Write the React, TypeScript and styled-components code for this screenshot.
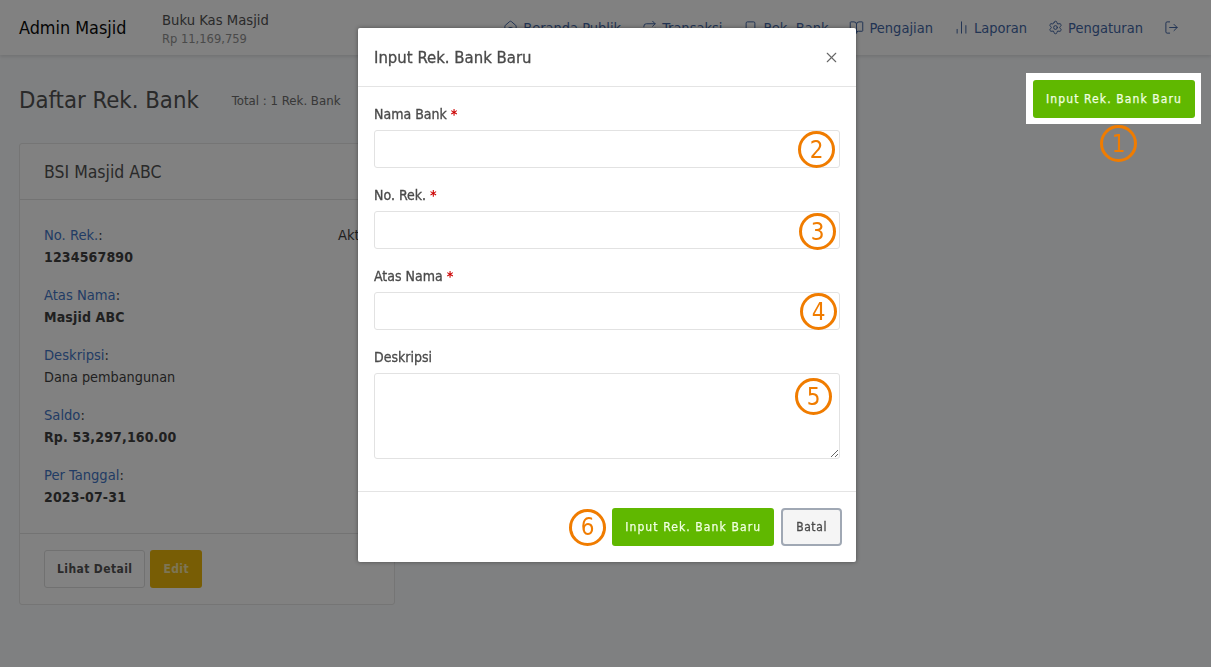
import React from "react";
import styled, { createGlobalStyle } from "styled-components";
import { Bookmark, BookOpen, ChartNoAxesColumn, Home, LogOut, Repeat, Settings, X } from "lucide-react";

const GlobalStyle = createGlobalStyle`
  html, body {
    margin: 0;
    padding: 0;
    height: 100%;
    background: #f4f6f8;
    overflow: hidden;
    font-family: "DejaVu Sans Condensed", "DejaVu Sans", sans-serif;
    font-stretch: condensed;
    font-size: 14px;
    color: #363636;
  }
  * { box-sizing: border-box; }
`;

const Page = styled.div`
  height: 667px;
  width: 1211px;
`;

const Navbar = styled.nav`
  height: 55px;
  display: flex;
  align-items: center;
  padding: 0 19px;
  background: #f8f8f8;
  box-shadow: 0 2px 3px rgba(10, 10, 10, 0.1);
`;

const Brand = styled.div`
  font-size: 17.85px;
  color: #000;
  width: 143px;
`;

const KasBlock = styled.div`
  display: flex;
  flex-direction: column;
  gap: 3px;
  margin-top: 1px;
`;

const KasTitle = styled.div`
  font-size: 14.7px;
  color: #4a4a4a;
`;

const KasValue = styled.div`
  font-size: 12.8px;
  color: #8a8a8a;
`;

const NavMenu = styled.div`
  margin-left: auto;
  display: flex;
  align-items: center;
  gap: 21px;
  padding-right: 13px;
`;

const NavLink = styled.a`
  display: flex;
  align-items: center;
  gap: 5px;
  font-size: 14.5px;
  color: #3a5f9f;
  white-space: nowrap;
`;

const Content = styled.main`
  padding: 30px 19px 0;
`;

const TitleRow = styled.div`
  display: flex;
  align-items: center;
  gap: 33px;
  height: 58px;
  padding-bottom: 28px;
`;

const PageTitle = styled.h1`
  margin: 0;
  font-size: 23.7px;
  font-weight: 400;
  color: #4a4a4a;
`;

const Total = styled.span`
  font-size: 13.1px;
  color: #666;
  margin-top: 1px;
`;

const Card = styled.section`
  width: 376px;
  background: #f8f8f8;
  border: 1px solid #e0e0e0;
  border-radius: 3px;
`;

const CardHead = styled.header`
  height: 56px;
  padding: 0 24px;
  display: flex;
  align-items: center;
  font-size: 17.5px;
  color: #4a4a4a;
  border-bottom: 1px solid #dcdcdc;
`;

const CardBody = styled.div`
  padding: 25px 24px 24px;
  height: 334px;
  border-bottom: 1px solid #dcdcdc;
  display: flex;
  flex-direction: column;
  gap: 18px;
`;

const Info = styled.div`
  display: flex;
  flex-direction: column;
  gap: 4px;
  line-height: 19px;
  position: relative;
`;

const InfoLabel = styled.div`
  color: #363636;
  font-size: 14.6px;
  span {
    color: #3a6fc0;
  }
`;

const InfoValue = styled.div<{ $bold?: boolean }>`
  font-size: ${({ $bold }) => ($bold ? "14px" : "14.3px")};
  font-weight: ${({ $bold }) => ($bold ? 700 : 400)};
  letter-spacing: ${({ $bold }) => ($bold ? "0.15px" : "0")};
  color: #363636;
`;

const Status = styled.span`
  position: absolute;
  top: 0;
  left: 294px;
  font-size: 14.6px;
`;

const CardFoot = styled.footer`
  padding: 16px 24px;
  display: flex;
  gap: 5px;
`;

const Button = styled.button<{ $variant: "green" | "plain" | "gold" | "cancel" }>`
  height: 38px;
  padding: 0 12px;
  border-radius: 3px;
  font-family: inherit;
  font-stretch: inherit;
  font-size: 12px;
  font-weight: 700;
  letter-spacing: 0.4px;
  border: 1px solid transparent;
  ${({ $variant }) =>
    $variant === "green" &&
    "background: #60b800; color: #f0ffe0; font-weight: 400; letter-spacing: 1.1px; -webkit-text-stroke: 0.25px #f0ffe0;"}
  ${({ $variant }) =>
    $variant === "plain" && "background: #fbfbfb; color: #4a4a4a; border-color: #d8d8d8;"}
  ${({ $variant }) =>
    $variant === "gold" && "background: #e6b000; color: #f0e0a0;"}
  ${({ $variant }) =>
    $variant === "cancel" &&
    "background: #f5f5f5; color: #4a4a4a; border: 2px solid #a0a8b4; border-radius: 4px; padding: 0 13px; letter-spacing: 0.6px; font-weight: 400; -webkit-text-stroke: 0.3px #4a4a4a;"}
`;

const Backdrop = styled.div`
  position: fixed;
  inset: 0;
  background: rgba(10, 10, 10, 0.5);
`;

const Highlight = styled.div`
  position: fixed;
  top: 73px;
  left: 1026px;
  width: 175px;
  height: 51px;
  background: #fff;
  display: flex;
  align-items: center;
  justify-content: center;
  padding-left: 1px;
`;

const Modal = styled.div`
  position: fixed;
  top: 28px;
  left: 358px;
  width: 498px;
  height: 534px;
  background: #fff;
  border-radius: 2px;
  box-shadow: 0 0 4px rgba(0, 0, 0, 0.4);
  display: flex;
  flex-direction: column;
`;

const ModalHead = styled.header`
  height: 59px;
  padding: 0 16px;
  display: flex;
  align-items: center;
  justify-content: space-between;
  border-bottom: 1px solid #e4e4e4;
  font-size: 16.6px;
  color: #4a4a4a;
  -webkit-text-stroke: 0.3px #4a4a4a;
`;

const CloseIcon = styled(X)`
  color: #666;
`;

const ModalBody = styled.div`
  flex: 1;
  padding: 18px 16px 0;
  display: flex;
  flex-direction: column;
  gap: 18px;
`;

const Field = styled.div`
  display: flex;
  flex-direction: column;
  gap: 6px;
`;

const Label = styled.label`
  font-size: 14px;
  color: #4a4a4a;
  line-height: 19px;
  -webkit-text-stroke: 0.3px #4a4a4a;
  span {
    color: #c00;
    font-weight: 700;
    -webkit-text-stroke: 0;
  }
`;

const Control = styled.div`
  position: relative;
`;

const Input = styled.input`
  display: block;
  width: 100%;
  height: 38px;
  border: 1px solid #e2e2e2;
  border-radius: 3px;
  background: #fff;
`;

const TextArea = styled.textarea`
  display: block;
  width: 100%;
  height: 86px;
  border: 1px solid #e2e2e2;
  border-radius: 3px;
  background: #fff;
`;

const Marker = styled.div`
  width: 37px;
  height: 37px;
  border: 3px solid #f07c00;
  border-radius: 50%;
  display: flex;
  align-items: center;
  justify-content: center;
  color: #f07c00;
  font-size: 24px;
  font-weight: 300;
`;

const FieldMarker = styled(Marker)<{ $right: number; $top: number }>`
  position: absolute;
  right: ${({ $right }) => $right}px;
  top: ${({ $top }) => $top}px;
`;

const FloatMarker = styled(Marker)`
  position: fixed;
  left: 1100px;
  top: 125px;
`;

const ModalFoot = styled.footer`
  height: 71px;
  padding: 0 14px 0 0;
  border-top: 1px solid #e4e4e4;
  display: flex;
  align-items: center;
  justify-content: flex-end;
  gap: 7px;
`;

const FootMarker = styled(Marker)`
  margin-right: -1px;
`;

const navItems = [
  { label: "Beranda Publik", Icon: Home },
  { label: "Transaksi", Icon: Repeat },
  { label: "Rek. Bank", Icon: Bookmark },
  { label: "Pengajian", Icon: BookOpen },
  { label: "Laporan", Icon: ChartNoAxesColumn },
  { label: "Pengaturan", Icon: Settings },
];

const infoRows = [
  { label: "No. Rek.", value: "1234567890", bold: true },
  { label: "Atas Nama", value: "Masjid ABC", bold: true },
  { label: "Deskripsi", value: "Dana pembangunan", bold: false },
  { label: "Saldo", value: "Rp. 53,297,160.00", bold: true },
  { label: "Per Tanggal", value: "2023-07-31", bold: true },
];

const formFields = [
  { label: "Nama Bank", n: 2, right: 5, top: 1 },
  { label: "No. Rek.", n: 3, right: 4, top: 2 },
  { label: "Atas Nama", n: 4, right: 3, top: 1 },
];

const App: React.FC = () => {
  return (
    <Page>
      <GlobalStyle />
      <Navbar>
        <Brand>Admin Masjid</Brand>
        <KasBlock>
          <KasTitle>Buku Kas Masjid</KasTitle>
          <KasValue>Rp 11,169,759</KasValue>
        </KasBlock>
        <NavMenu>
          {navItems.map(({ label, Icon }) => (
            <NavLink key={label}>
              <Icon size={15} strokeWidth={1.6} />
              {label}
            </NavLink>
          ))}
          <NavLink>
            <LogOut size={15} strokeWidth={1.6} />
          </NavLink>
        </NavMenu>
      </Navbar>
      <Content>
        <TitleRow>
          <PageTitle>Daftar Rek. Bank</PageTitle>
          <Total>Total : 1 Rek. Bank</Total>
        </TitleRow>
        <Card>
          <CardHead>BSI Masjid ABC</CardHead>
          <CardBody>
            {infoRows.map((row, i) => (
              <Info key={row.label}>
                <InfoLabel>
                  <span>{row.label}</span>:
                </InfoLabel>
                <InfoValue $bold={row.bold}>{row.value}</InfoValue>
                {i === 0 && <Status>Aktif</Status>}
              </Info>
            ))}
          </CardBody>
          <CardFoot>
            <Button $variant="plain">Lihat Detail</Button>
            <Button $variant="gold">Edit</Button>
          </CardFoot>
        </Card>
      </Content>
      <Backdrop />
      <Highlight>
        <Button $variant="green">Input Rek. Bank Baru</Button>
      </Highlight>
      <FloatMarker>1</FloatMarker>
      <Modal>
        <ModalHead>
          Input Rek. Bank Baru
          <CloseIcon size={17} strokeWidth={1.5} />
        </ModalHead>
        <ModalBody>
          {formFields.map((f) => (
            <Field key={f.label}>
              <Label>
                {f.label} <span>*</span>
              </Label>
              <Control>
                <Input />
                <FieldMarker $right={f.right} $top={f.top}>
                  {f.n}
                </FieldMarker>
              </Control>
            </Field>
          ))}
          <Field>
            <Label>Deskripsi</Label>
            <Control>
              <TextArea />
              <FieldMarker $right={8} $top={5}>
                5
              </FieldMarker>
            </Control>
          </Field>
        </ModalBody>
        <ModalFoot>
          <FootMarker>6</FootMarker>
          <Button $variant="green">Input Rek. Bank Baru</Button>
          <Button $variant="cancel">Batal</Button>
        </ModalFoot>
      </Modal>
    </Page>
  );
};

export default App;
